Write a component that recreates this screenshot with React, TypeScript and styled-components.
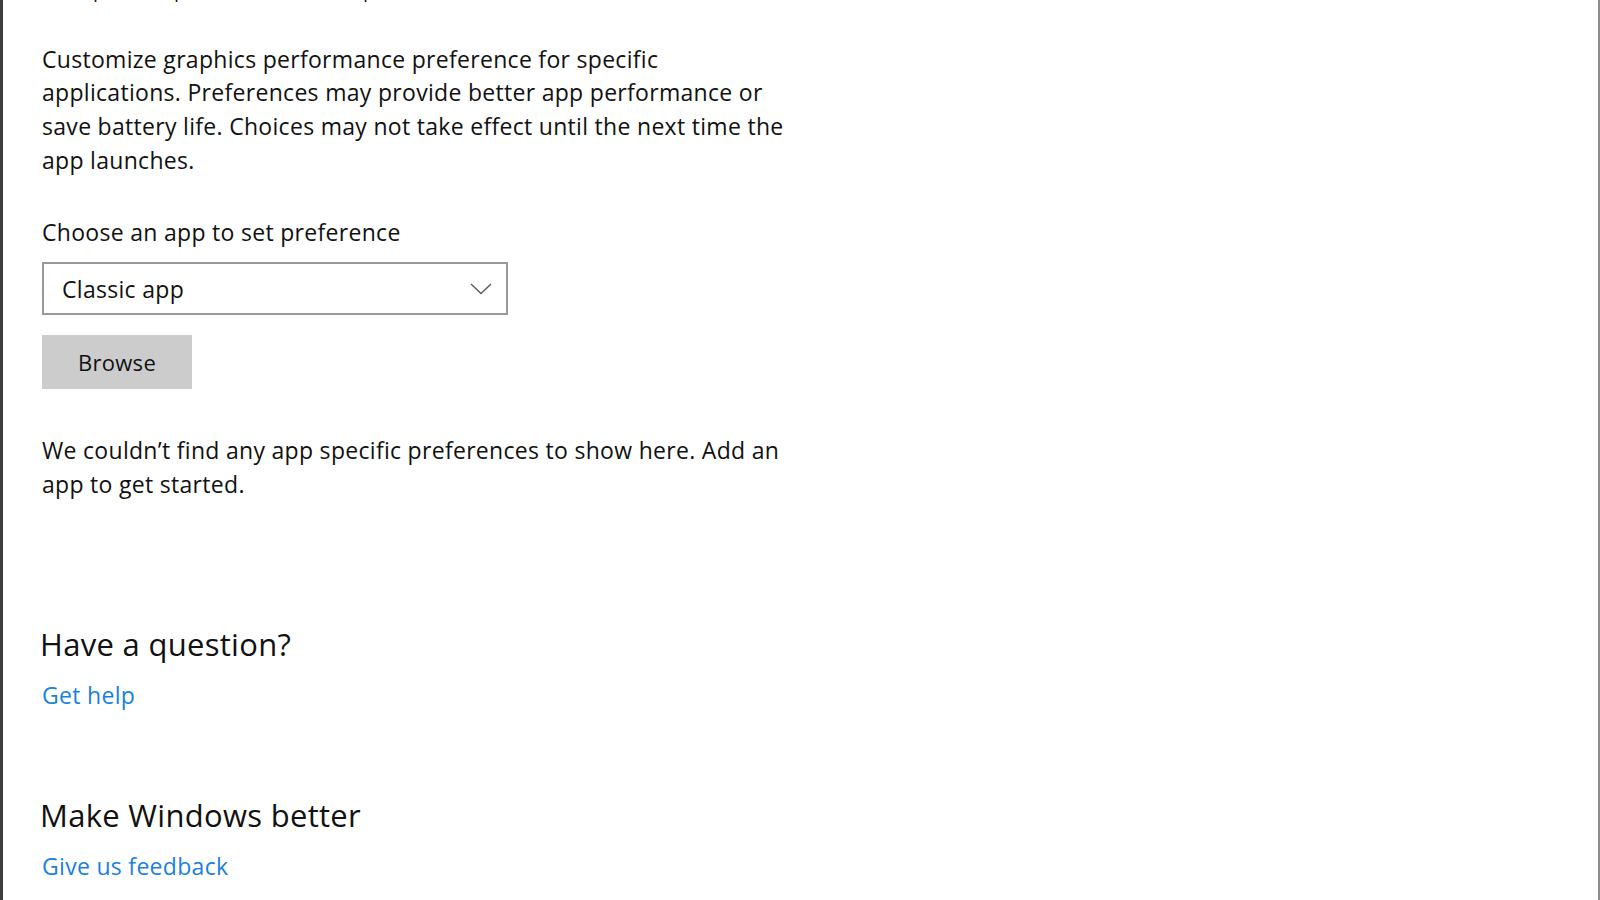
import React from "react";
import styled, { createGlobalStyle } from "styled-components";

const GlobalStyle = createGlobalStyle`
  html, body {
    margin: 0;
    padding: 0;
    background: #ffffff;
  }
  body {
    font-family: "Open Sans", "Noto Sans", "Liberation Sans", sans-serif;
    color: #111111;
  }
`;

const Window = styled.div`
  box-sizing: border-box;
  width: 1600px;
  height: 900px;
  overflow: hidden;
  background: #ffffff;
  border-left: 3px solid #3c3c3c;
  border-right: 2px solid #8c8c8c;
  padding-left: 39px;
  display: flex;
  flex-direction: column;
  align-items: flex-start;
`;

const PageTitle = styled.h1`
  margin: -37px 0 0 -1px;
  font-size: 31px;
  font-weight: 300;
  line-height: 40px;
  white-space: nowrap;
  color: #111;
`;

const Paragraph = styled.p<{ $top: number }>`
  margin: ${(p) => p.$top}px 0 0 0;
  font-size: 23px;
  letter-spacing: 0.3px;
  line-height: 33.7px;
  color: #111;
`;

const Select = styled.div`
  box-sizing: border-box;
  margin-top: 12px;
  width: 466px;
  height: 53px;
  border: 2px solid #999999;
  display: flex;
  align-items: center;
  justify-content: space-between;
  padding: 0 14px 0 18px;
  font-size: 23px;
  letter-spacing: 0.3px;
  color: #111;
`;

const Chevron = styled.svg`
  width: 22px;
  height: 12px;
  display: block;
`;

const Button = styled.button`
  margin-top: 20px;
  width: 150px;
  height: 54px;
  border: none;
  background: #cccccc;
  font-family: inherit;
  font-size: 22px;
  letter-spacing: 0.3px;
  color: #111;
  padding: 0;
`;

const SectionTitle = styled.h2<{ $top: number }>`
  margin: ${(p) => p.$top}px 0 0 -2px;
  font-size: 31px;
  letter-spacing: 0.3px;
  font-weight: 400;
  line-height: 40px;
  color: #111;
`;

const HelpLink = styled.a`
  margin-top: 14px;
  font-size: 23px;
  letter-spacing: 0.3px;
  line-height: 34px;
  color: #1a7fe0;
  text-decoration: none;
`;

export default function App() {
  return (
    <>
      <GlobalStyle />
      <Window>
        <PageTitle>Graphics performance preference</PageTitle>
        <Paragraph $top={39.5}>
          Customize graphics performance preference for specific
          <br />
          applications. Preferences may provide better app performance or
          <br />
          save battery life. Choices may not take effect until the next time the
          <br />
          app launches.
        </Paragraph>
        <Paragraph $top={39}>Choose an app to set preference</Paragraph>
        <Select>
          <span>Classic app</span>
          <Chevron viewBox="0 0 22 12">
            <polyline points="1,1 11,10.5 21,1" fill="none" stroke="#5a5a5a" strokeWidth="1.4" />
          </Chevron>
        </Select>
        <Button>Browse</Button>
        <Paragraph $top={45}>
          We couldn’t find any app specific preferences to show here. Add an
          <br />
          app to get started.
        </Paragraph>
        <SectionTitle $top={123}>Have a question?</SectionTitle>
        <HelpLink href="#">Get help</HelpLink>
        <SectionTitle $top={83}>Make Windows better</SectionTitle>
        <HelpLink href="#">Give us feedback</HelpLink>
      </Window>
    </>
  );
}
